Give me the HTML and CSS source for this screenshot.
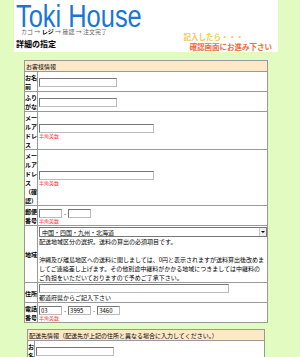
FILE: index.html
```html
<!DOCTYPE html>
<html lang="ja">
<head>
    <meta charset="UTF-8">
    <meta name="viewport" content="width=device-width, initial-scale=1.0">
    <title>Toki House - 詳細の指定</title>
    <link rel="stylesheet" href="styles.css">
</head>
<body>
    <div class="page">
        <div class="header">
            <div class="brand">
                <div class="logo">Toki House</div>
                <div class="steps">カゴ → <b>レジ</b> → 確認 → 注文完了</div>
                <h1 class="title">詳細の指定</h1>
            </div>
            <div class="notes">
                <p class="note1">記入したら・・・</p>
                <p class="note2">確認画面にお進み下さい</p>
            </div>
        </div>

        <!-- お客様情報 -->
        <table class="form">
            <tr><th colspan="2" class="cap">お客様情報</th></tr>
            <tr>
                <th class="lbl">お名前</th>
                <td><input class="w-name" type="text"></td>
            </tr>
            <tr>
                <th class="lbl">ふりがな</th>
                <td><input class="w-name" type="text"></td>
            </tr>
            <tr>
                <th class="lbl">メールアドレス</th>
                <td>
                    <input class="w-mail" type="text">
                    <div class="hint">半角英数</div>
                </td>
            </tr>
            <tr>
                <th class="lbl">メールアドレス（確認）</th>
                <td>
                    <input class="w-mail" type="text">
                    <div class="hint">半角英数</div>
                </td>
            </tr>
            <tr>
                <th class="lbl">郵便番号</th>
                <td>
                    <div class="line">
                        <input class="w-short" type="text"><span>-</span><input class="w-short" type="text">
                    </div>
                    <div class="hint">半角英数</div>
                </td>
            </tr>
            <tr>
                <th class="lbl">地域</th>
                <td>
                    <div class="select-box">
                        <select class="region">
                            <option>中国・四国・九州・北海道</option>
                            <option>関東・甲信越</option>
                            <option>東北</option>
                        </select>
                        <span class="arrow"></span>
                    </div>
                    <div class="desc">
                        配送地域区分の選択。送料の算出の必須項目です。<br><br>
                        沖縄及び離島地区への送料に関しましては、0円と表示されますが送料算出後改めましてご連絡差し上げます。その他別途中継料がかかる地域につきましては中継料のご負担をいただいておりますので予めご了承下さい。
                    </div>
                </td>
            </tr>
            <tr>
                <th class="lbl">住所</th>
                <td>
                    <input class="w-addr" type="text">
                    <div>都道府県からご記入下さい</div>
                </td>
            </tr>
            <tr>
                <th class="lbl">電話番号</th>
                <td>
                    <div class="line">
                        <input class="w-short" type="text" value="03"><span>-</span><input class="w-short" type="text" value="3995"><span>-</span><input class="w-short" type="text" value="3460">
                    </div>
                    <div class="hint">半角英数</div>
                </td>
            </tr>
        </table>

        <!-- 配送先情報 -->
        <table class="form form-ship">
            <tr><th colspan="2" class="cap">配送先情報（配送先が上記の住所と異なる場合に入力してください。）</th></tr>
            <tr>
                <th class="lbl">お名前</th>
                <td>
                    <input class="w-name" type="text">
                    <div>※注文者と配送先が異なる場合、お送り先を下記にご記入下さい</div>
                </td>
            </tr>
        </table>
    </div>
</body>
</html>
```

FILE: styles.css
```css
* {
    box-sizing: border-box;
}

html, body {
    overflow: hidden;
}

body {
    margin: 0;
    background-color: #e2fbc0;
    font-family: "Noto Sans CJK JP", sans-serif;
    color: #000;
}

.page {
    width: 264px;
    margin-left: 14px;
}

/* header */
.header {
    display: flex;
    justify-content: space-between;
    background: #fff;
    padding: 0 6px 3px 2px;
}

.logo {
    font-family: "Liberation Sans", Arial, sans-serif;
    font-size: 31px;
    line-height: 25px;
    padding-top: 4px;
    color: #1a76d6;
    white-space: nowrap;
    transform: scaleX(0.82);
    transform-origin: left;
}

.steps {
    font-size: 6px;
    line-height: 6px;
    padding-left: 5px;
    color: #666;
    white-space: nowrap;
}

.steps b {
    color: #000;
}

.title {
    font-size: 8px;
    line-height: 10px;
    margin: 4px 0 0;
    font-weight: bold;
}

.notes {
    align-self: flex-end;
    margin-bottom: -2px;
    font-size: 7.5px;
    line-height: 9.5px;
    font-weight: bold;
    white-space: nowrap;
}

.notes p {
    margin: 0;
}

.note1 {
    color: #f3c84c;
}

.note2 {
    color: #f06c40;
    padding-left: 6px;
}

/* form tables */
.form {
    width: 244px;
    margin: 8px auto 0;
    border-collapse: collapse;
    background: #fff;
    font-size: 6px;
    line-height: 9px;
    border: 1px solid #888;
}

.form th, .form td {
    border: 1px solid #999;
    padding: 1px 0 0;
    text-align: left;
    vertical-align: middle;
}

.form td {
    padding-left: 1px;
}

.form .cap {
    background: #fde8c8;
    font-weight: normal;
    padding-left: 1px;
}

.form .lbl {
    width: 12px;
    font-weight: bold;
}

.form input {
    display: block;
    height: 9px;
    margin: 0;
    padding: 0 1px;
    font: 6px "Noto Sans CJK JP", sans-serif;
    border: 1px solid;
    border-color: #777 #bbb #bbb #777;
    background: #fff;
}

.w-name { width: 78px; }
.w-mail { width: 115px; }
.w-short { width: 23px; }
.w-addr { width: 190px; }

.line {
    display: flex;
    align-items: center;
    gap: 2px;
}

.hint {
    color: #f33;
    font-size: 5px;
    line-height: 6px;
}

.select-box {
    position: relative;
}

.region {
    display: block;
    width: 100%;
    height: 10px;
    margin: 0;
    padding: 0 2px;
    font: 6px "Noto Sans CJK JP", sans-serif;
    border: 1px solid #777;
    background: #fff;
    appearance: none;
    -webkit-appearance: none;
}

.arrow {
    position: absolute;
    top: 1px;
    right: 1px;
    width: 7px;
    height: 8px;
    background: #eee;
    border-left: 1px solid #ccc;
}

.arrow::after {
    content: "";
    position: absolute;
    left: 1px;
    top: 3px;
    border-left: 2px solid transparent;
    border-right: 2px solid transparent;
    border-top: 2px solid #000;
}

.desc {
    padding-right: 2px;
}

.form-ship {
    width: 238px;
    margin-top: 6px;
}

.form-ship .lbl {
    width: 6px;
}
```
